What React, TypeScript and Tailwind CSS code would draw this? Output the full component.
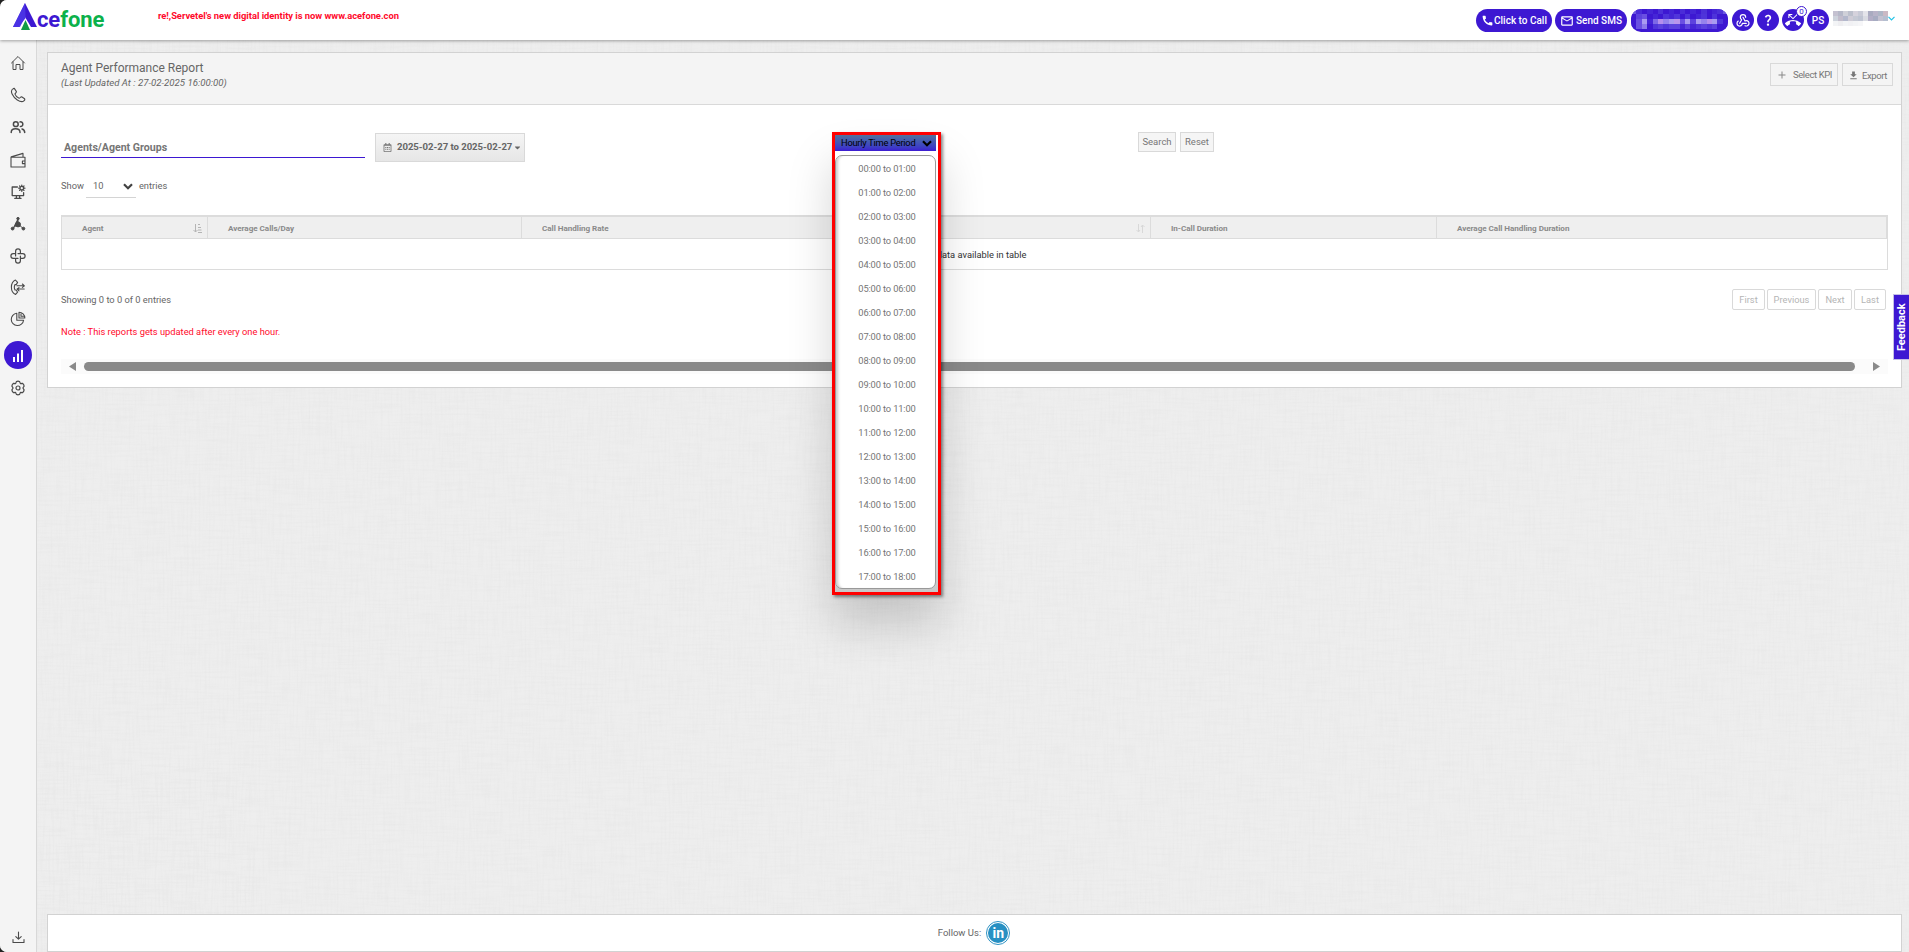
import React from "react";
import { MdCall, MdDownload, MdMailOutline, MdPhoneMissed, MdQuestionMark } from "react-icons/md";
import { FaCaretDown, FaRegCalendarAlt } from "react-icons/fa";
import { TbWebhook } from "react-icons/tb";

const line = {
  fill: "none",
  stroke: "currentColor",
  strokeLinecap: "round" as const,
  strokeLinejoin: "round" as const,
};

const navItems = [
  {
    name: "home",
    mt: "mt-[15px]",
    icon: (
      <g {...line} strokeWidth="1">
        <path d="M1.5 8 8 1.5 14.5 8M3 6.8V14.5H6V9.5H10V14.5H13V6.8" />
      </g>
    ),
  },
  {
    name: "calls",
    mt: "mt-[16px]",
    icon: (
      <path
        {...line}
        strokeWidth="1.1"
        d="M3.2 1.6 4.3 1.4 6.4 4.6C6.6 5.8 5 6.1 5 7.1 5.6 8.8 7.4 10.6 9.1 11.2 10.1 11.3 10.4 9.6 11.6 9.7L14.6 11.7C15 12.4 14.6 13.3 13.9 13.9 12.3 15.3 9.8 14.6 7.3 13 5 11.5 3.3 9.5 2.1 7 1.1 4.8 1 2.9 3.2 1.6Z"
      />
    ),
  },
  {
    name: "users",
    mt: "mt-[16px]",
    icon: (
      <g {...line} strokeWidth="1.5">
        <circle cx="5.8" cy="5.2" r="2.4" />
        <path d="M1.2 13.4C1.2 10.9 3 9.8 5.6 9.8S10 10.9 10 13.4M10 2.9C13.6 2.4 13.8 7.5 10.4 7.6M12 9.9C13.7 10.3 14.7 11.6 14.7 13.4" />
      </g>
    ),
  },
  {
    name: "wallet",
    mt: "mt-[17px]",
    icon: (
      <g {...line} strokeWidth="1.1">
        <path d="M1 5.2H15V15H1ZM1.2 4.9 13 1.4V5M15 9H12.4V11.6H15" />
      </g>
    ),
  },
  {
    name: "monitor",
    mt: "mt-[16px]",
    icon: (
      <g {...line} strokeWidth="1.3">
        <path d="M7.4 3H2.2V11.6H13.6V8.6M4.8 14.4H11M6.4 11.8V14M9.6 11.8V14" />
        <circle cx="11.8" cy="4.2" r="1.8" />
        <path d="M11.8 1.1V1.8M11.8 6.6V7.3M8.7 4.2H9.4M14.2 4.2H14.9M9.6 2 10 2.4M13.6 6 14 6.4M14 2 13.6 2.4M9.6 6.4 10 6" />
      </g>
    ),
  },
  {
    name: "network",
    mt: "mt-[16px]",
    icon: (
      <g fill="currentColor" stroke="currentColor" strokeWidth="1">
        <circle cx="8" cy="8.4" r="2.5" />
        <circle cx="8" cy="2.6" r="1.2" />
        <circle cx="2.6" cy="12.6" r="1.4" />
        <circle cx="13.4" cy="12.6" r="1.4" />
        <path d="M8 2V8L2.4 12.8M8 8 13.6 12.8" />
      </g>
    ),
  },
  {
    name: "integrations",
    mt: "mt-[16px]",
    icon: (
      <g {...line} strokeWidth="1.2">
        <path d="M5.6 8V3.2A2.4 2.3 0 0 1 10.4 3.2V5.4M8 5.6H12.8A2.3 2.4 0 0 1 12.8 10.4H10.6M10.4 8V12.8A2.4 2.3 0 0 1 5.6 12.8V10.6M8 10.4H3.2A2.3 2.4 0 0 1 3.2 5.6H5.4" />
      </g>
    ),
  },
  {
    name: "call-routing",
    mt: "mt-[15px]",
    icon: (
      <g {...line} strokeWidth="1.1">
        <path d="M5.4 1 7.6 3.4 6.2 5.6H5C4.2 7.2 4.2 9.4 5 11H6.2L7.6 13.2 5.6 15.4C2.8 14.2 1.4 11.4 1.4 8.2S2.8 2.2 5.4 1Z" />
        <path d="M7 6.8H14.2M12.4 5 14.4 6.8 12.4 8.4M14.2 10H7.4M9 8.6 7.2 10 9 11.8" />
      </g>
    ),
  },
  {
    name: "analytics",
    mt: "mt-[16px]",
    icon: (
      <g {...line} strokeWidth="1.1">
        <path d="M6.8 2.2A6.2 6.2 0 1 0 13.6 9.2H6.8Z" />
        <path d="M9 1.2V7H14.8A5.8 5.8 0 0 0 9 1.2ZM11 3V5.2H13.4" />
      </g>
    ),
  },
];

const times = [
  "00:00 to 01:00",
  "01:00 to 02:00",
  "02:00 to 03:00",
  "03:00 to 04:00",
  "04:00 to 05:00",
  "05:00 to 06:00",
  "06:00 to 07:00",
  "07:00 to 08:00",
  "08:00 to 09:00",
  "09:00 to 10:00",
  "10:00 to 11:00",
  "11:00 to 12:00",
  "12:00 to 13:00",
  "13:00 to 14:00",
  "14:00 to 15:00",
  "15:00 to 16:00",
  "16:00 to 17:00",
  "17:00 to 18:00",
];

const columns = [
  { title: "Agent", width: "w-[146px]", sort: "asc" },
  { title: "Average Calls/Day", width: "w-[314px]", sort: "" },
  { title: "Call Handling Rate", width: "w-[330px]", sort: "" },
  { title: "", width: "w-[299px]", sort: "both" },
  { title: "In-Call Duration", width: "w-[286px]", sort: "" },
  { title: "Average Call Handling Duration", width: "flex-1", sort: "" },
];

const pages = [
  { label: "First", width: "w-[33px]" },
  { label: "Previous", width: "w-[49px]" },
  { label: "Next", width: "w-[34px]" },
  { label: "Last", width: "w-[32px]" },
];

// redacted account pill and user name, one colour per mosaic cell
const pillMosaic = [
  ["#6b58e0", "#4a2cd8", "#3d18d2", "#4526d6", "#3d18d2", "#4c31d8", "#3d18d2", "#4526d6", "#3d18d2", "#4a2cd8", "#3d18d2", "#4526d6", "#3d18d2", "#4c31d8", "#3d18d2", "#4526d6", "#4c31d8", "#6b58e0"],
  ["#3d18d2", "#5c42de", "#6a50e2", "#3d18d2", "#4526d6", "#3d18d2", "#4e34da", "#4526d6", "#5036da", "#3d18d2", "#4e34da", "#3d18d2", "#4526d6", "#4e34da", "#3d18d2", "#4e34da", "#3d18d2", "#3d18d2"],
  ["#3d18d2", "#6a50e2", "#a99bf0", "#4526d6", "#7d69e6", "#b58eec", "#9583ec", "#a99bf0", "#b995ec", "#6a50e2", "#a99bf0", "#5c42de", "#a99bf0", "#9583ec", "#b58eec", "#a99bf0", "#5036da", "#3d18d2"],
  ["#3d18d2", "#6a50e2", "#8d7bea", "#3d18d2", "#5036da", "#5c42de", "#5036da", "#5c42de", "#5c42de", "#4526d6", "#5c42de", "#4526d6", "#5036da", "#5c42de", "#5036da", "#5c42de", "#3d18d2", "#3d18d2"],
];

const nameMosaic = [
  ["#c4c1d0", "#b5b8c8", "#cfd0d8", "#bcc0cc", "#d5d2dc", "#c8cad6", "#e4e4ea", "#a9abc0", "#b8b3c8", "#aeb6c6", "#cbb9c4"],
  ["#cdd3dc", "#c2bccb", "#b3b8cc", "#cfccd6", "#c5c9d4", "#bfc4d2", "#d9dbe2", "#b3aec6", "#a7acc2", "#c4c1d0", "#b5bfd0"],
  ["#f3f4f6", "#eeeef1", "#f3f4f6", "#f1f1f4", "#f3f4f6", "#f6f6f8", "#ffffff", "#ffffff", "#ffffff", "#ffffff", "#ffffff"],
];

const Mosaic = ({ rows, w, h }: { rows: string[][]; w: number; h: number }) => (
  <svg width={w * rows[0].length} height={h * rows.length} shapeRendering="crispEdges">
    {rows.map((row, y) =>
      row.map((fill, x) => (
        <rect key={`${x}-${y}`} x={x * w} y={y * h} width={w} height={h} fill={fill} />
      ))
    )}
  </svg>
);

const Chevron = ({ className }: { className: string }) => (
  <svg viewBox="0 0 10 7" className={className}>
    <path d="M1 1.3 5 5.3 9 1.3" fill="none" stroke="currentColor" strokeWidth="2.2" />
  </svg>
);

// faint linen weave behind the page content
const Linen = () => (
  <svg className="pointer-events-none absolute inset-0 size-full opacity-35">
    <filter id="weft" x="0" y="0" width="100%" height="100%">
      <feTurbulence type="fractalNoise" baseFrequency="0.03 0.5" numOctaves="2" seed="4" />
      <feColorMatrix values="0 0 0 0 0.4  0 0 0 0 0.4  0 0 0 0 0.4  0.3 0 0 0 -0.12" />
    </filter>
    <filter id="warp" x="0" y="0" width="100%" height="100%">
      <feTurbulence type="fractalNoise" baseFrequency="0.5 0.03" numOctaves="2" seed="9" />
      <feColorMatrix values="0 0 0 0 0.4  0 0 0 0 0.4  0 0 0 0 0.4  0.3 0 0 0 -0.12" />
    </filter>
    <rect width="100%" height="100%" filter="url(#weft)" />
    <rect width="100%" height="100%" filter="url(#warp)" />
  </svg>
);

const Header = () => (
  <header className="relative z-10 flex h-10 shrink-0 items-start bg-white shadow-[0_1px_3px_rgba(0,0,0,0.35)]">
    <div className="flex w-[158px] items-start pl-[13px] pt-[3px]">
      <svg width="25" height="27" viewBox="0 0 25 27">
        <path d="M12 0 0 24H7L12 14Z" fill="#5a43ee" />
        <path d="M12 0 24 24H18L12 14Z" fill="#3d18d2" />
        <path d="M12 0 12.6 15 5.6 24H0Z" fill="#4a32e4" />
        <path d="M12.5 17 8 27H17Z" fill="#0e9b45" />
      </svg>
      <span className="-ml-px mt-[5px] text-[22px] font-bold leading-6 tracking-[-0.1px] text-[#3d18d2]">
        ce<span className="text-[#0cb14b]">fone</span>
      </span>
    </div>
    <div className="mt-[9px] whitespace-nowrap text-[9.4px] font-bold leading-[14px] tracking-[-0.03px] text-[#ff0a2b]">
      re!,Servetel's new digital identity is now www.acefone.con
    </div>

    <div className="ml-auto mr-[14px] flex gap-[3px] pt-[9px] text-[10px] font-medium text-white">
      <button className="flex h-[23px] w-[76px] items-center justify-center rounded-full bg-[#3d18d2]">
        <MdCall size={13} />
        Click to Call
      </button>
      <button className="flex h-[23px] w-[72px] items-center justify-center gap-0.5 rounded-full bg-[#3d18d2]">
        <MdMailOutline size={14} />
        Send SMS
      </button>
      <div className="mx-px flex h-[23px] w-[97px] items-start justify-center overflow-hidden rounded-[10px] bg-[#3d18d2]">
        <Mosaic rows={pillMosaic} w={5.4} h={5} />
      </div>
      <button className="flex size-[22px] items-center justify-center rounded-full bg-[#3d18d2]">
        <TbWebhook size={16} strokeWidth={1.8} />
      </button>
      <button className="flex size-[22px] items-center justify-center rounded-full bg-[#3d18d2]">
        <MdQuestionMark size={14} />
      </button>
      <button className="relative flex size-[22px] items-center justify-center rounded-full bg-[#3d18d2]">
        <MdPhoneMissed size={16} />
        <span className="absolute -right-[3px] -top-[3px] flex size-[11px] items-center justify-center rounded-full border border-[#3d18d2] bg-white text-[8px] font-normal leading-none text-[#3d18d2]">
          0
        </span>
      </button>
      <button className="flex size-[22px] items-center justify-center rounded-full bg-[#3d18d2]">
        PS
      </button>
      <div className="ml-px mt-0.5">
        <Mosaic rows={nameMosaic} w={5} h={5} />
      </div>
      <svg width="7" height="5" viewBox="0 0 7 5" className="-ml-[3px] mt-[7px]">
        <path d="M.5.8 3.5 3.8 6.5.8" fill="none" stroke="#22c3e6" strokeWidth="1.2" />
      </svg>
    </div>
  </header>
);

const Sidebar = () => (
  <aside className="flex w-[37px] shrink-0 flex-col items-center border-r border-[#d8d8d8] bg-[#f4f4f4] text-[#4a4a4a]">
    {navItems.map((item) => (
      <svg key={item.name} viewBox="0 0 16 16" className={`${item.mt} size-4 shrink-0`}>
        {item.icon}
      </svg>
    ))}
    <div className="mt-[14px] flex size-7 items-center justify-center rounded-full bg-[#3d18d2]">
      <svg width="12" height="13" viewBox="0 0 12 13" fill="#fff">
        <path d="M1 8H3V13H1ZM5 4.5H7V13H5ZM9 1H11V13H9Z" />
      </svg>
    </div>
    <svg viewBox="0 0 16 16" className="mt-[11px] size-4" {...line} strokeWidth="1.2">
      <circle cx="8" cy="8" r="2" />
      <path d="M6.4 1.6Q8 .8 9.6 1.6L10.4 3.6 12.5 3.3Q14 4.3 14.1 6.1L12.9 8 14.1 9.9Q14 11.7 12.5 12.7L10.4 12.4 9.6 14.4Q8 15.2 6.4 14.4L5.6 12.4 3.5 12.7Q2 11.7 1.9 9.9L3.1 8 1.9 6.1Q2 4.3 3.5 3.3L5.6 3.6Z" />
    </svg>
    <svg viewBox="0 0 13 13" className="mb-[8px] mt-auto size-[13px]" {...line} strokeWidth="1.1">
      <path d="M1 8.5V11.5H12V8.5M6.5 1V8M3.8 5.6 6.5 8.2 9.2 5.6" />
    </svg>
  </aside>
);

const TimePeriod = () => (
  <div className="absolute -top-px left-[771px] z-10 h-[463px] w-[109px] border-[3px] border-[#ff0000] shadow-[2px_2px_3px_rgba(0,0,0,0.45),0_30px_45px_rgba(0,0,0,0.17)]">
    <div className="size-full bg-gradient-to-b from-white from-60% to-[#c8c8c8]">
      <div className="flex h-4 w-[101px] items-center justify-between bg-gradient-to-b from-[#52709b] to-[#3d18d2] pl-[6px] pr-1 text-[9.3px] tracking-[-0.25px] text-black">
        Hourly Time Period
        <Chevron className="h-[7px] w-[10px]" />
      </div>
      <ul className="mt-1 h-[434px] w-[101px] rounded-[7px] border border-[#999] bg-white pl-[3px] pt-px text-center text-[9.3px] tracking-[-0.13px] text-[#757575] shadow-[inset_4px_0_3px_-2px_#ccc]">
        {times.map((time) => (
          <li key={time} className="h-6 leading-6">
            {time}
          </li>
        ))}
      </ul>
    </div>
  </div>
);

const Filters = () => (
  <div className="relative flex h-[30px] items-start">
    <div className="h-[25px] w-[304px] border-b border-[#3d18d2] pl-[3px] text-[10.6px] font-bold leading-[29px] text-[#757575]">
      Agents/Agent Groups
    </div>
    <button className="ml-[10px] flex h-[29px] w-[150px] items-center whitespace-nowrap border border-[#d9d9d9] bg-gradient-to-b from-[#f5f5f5] to-[#e6e6e6] pb-px pl-[7px] text-[9.6px] font-bold tracking-[-0.05px] text-[#666]">
      <FaRegCalendarAlt size={9} className="mr-[5px] shrink-0 text-[#777]" />
      2025-02-27 to 2025-02-27
      <FaCaretDown size={9} className="ml-px shrink-0" />
    </button>
    <TimePeriod />
    <div className="ml-[613px] flex gap-1 text-[9.5px] text-[#777]">
      <button className="-mt-px h-5 w-[38px] border border-[#d9d9d9] bg-[#f5f5f5]">Search</button>
      <button className="-mt-px h-5 w-[34px] border border-[#d9d9d9] bg-[#f5f5f5]">Reset</button>
    </div>
  </div>
);

const SortIcon = ({ sort }: { sort: string }) => (
  <svg width="9" height="9" viewBox="0 0 9 9" fill="none" stroke={sort === "asc" ? "#b4b4b4" : "#d8d8d8"}>
    {sort === "asc" ? (
      <path d="M2.5 0V8M.5 6 2.5 8 4.5 6M5 .5H7M5 3.5H8M5 6H8.5M5 8.5H9" />
    ) : (
      <path d="M2.5 0V8M.5 6 2.5 8 4 6M6.5 9V1M5 3 6.5 1 8.5 3" />
    )}
  </svg>
);

const Table = () => (
  <div className="mt-[17px] border border-t-2 border-[#dcdcdc]">
    <div className="flex h-[22px] border-b border-[#dcdcdc] bg-[#efefef] text-[8.1px] font-bold text-[#8a8a8a]">
      {columns.map((col, i) => (
        <div
          key={i}
          className={`${col.width} flex shrink-0 items-center justify-between border-r border-[#dcdcdc] pl-5 pr-[5px] pt-px`}
        >
          <span className="tracking-[-0.03px]">{col.title}</span>
          {col.sort && <SortIcon sort={col.sort} />}
        </div>
      ))}
    </div>
    <div className="h-[30px] text-center text-[9.3px] leading-[32px] text-[#333]">
      No data available in table
    </div>
  </div>
);

const App = () => {
  return (
    <div className="bg-[#222]">
      <div className="relative flex h-[952px] w-full flex-col overflow-hidden rounded-l-[7px] bg-[#ededed] font-['Roboto',sans-serif] text-[9.3px] text-[#666]">
        <Header />
        <div className="flex min-h-0 flex-1">
          <Sidebar />
          <main className="relative flex flex-1 flex-col bg-[#eeeeee] pl-[10px] pr-[7px] pt-3">
            <Linen />
            {/* Report */}
            <section className="relative border border-[#d2d2d2] bg-white">
              <div className="flex h-[52px] justify-between border-b border-[#d9d9d9] bg-[#f4f4f4] pl-[13px] pr-[8px]">
                <div>
                  <h1 className="pt-[7px] text-[12px] leading-4">Agent Performance Report</h1>
                  <p className="text-[9.65px] italic leading-[14px]">(Last Updated At : 27-02-2025 16:00:00)</p>
                </div>
                <div className="flex gap-1 pt-[10px] text-[9.5px] tracking-[-0.4px] text-[#777]">
                  <button className="flex h-[23px] w-[68px] items-center justify-end border border-[#d9d9d9] pr-[5px] pt-px">
                    <svg width="8" height="8" viewBox="0 0 8 8" className="mr-[7px]">
                      <path d="M4 .5V7.5M.5 4H7.5" stroke="#888" />
                    </svg>
                    Select KPI
                  </button>
                  <button className="flex h-[23px] w-[51px] items-center justify-end border border-[#d9d9d9] pr-[5px] pt-[3px]">
                    <MdDownload size={11} className="mb-[2px] mr-[3px]" />
                    Export
                  </button>
                </div>
              </div>

              <div className="px-[13px] pb-[13px] pt-[28px]">
                <Filters />
                <div className="mt-[12px] flex h-[23px] leading-[21px]">
                  Show
                  <div className="ml-[2px] flex w-[50px] items-center justify-between border-b border-[#d4d4d4] pl-[7px] pr-[3px]">
                    <span className="pb-px">10</span>
                    <Chevron className="h-[7px] w-[10px] text-[#444]" />
                  </div>
                  <span className="ml-[3px]">entries</span>
                </div>
                <Table />
                <div className="mt-[19px] flex h-[21px] items-center justify-between">
                  <span>Showing 0 to 0 of 0 entries</span>
                  <div className="mr-[2px] flex gap-0.5 text-[#b5b5b5]">
                    {pages.map((page) => (
                      <button key={page.label} className={`${page.width} h-[21px] rounded-[2px] border border-[#d9d9d9]`}>
                        {page.label}
                      </button>
                    ))}
                  </div>
                </div>
                <p className="mt-[15px] leading-[14px] text-[#ff0a2b]">
                  Note : This reports gets updated after every one hour.
                </p>
                <div className="mt-5 flex h-[15px] items-center bg-[#fbfbfb] px-2">
                  <svg width="7" height="9" viewBox="0 0 7 9" fill="#8a8a8a">
                    <path d="M7 0V9L0 4.5Z" />
                  </svg>
                  <div className="ml-2 mr-[18px] h-[9px] flex-1 rounded-full bg-[#8a8a8a]" />
                  <svg width="7" height="9" viewBox="0 0 7 9" fill="#8a8a8a">
                    <path d="M0 0V9L7 4.5Z" />
                  </svg>
                </div>
              </div>
            </section>

            <footer className="relative mt-auto flex h-[38px] items-center justify-center gap-[5px] border border-[#d2d2d2] bg-white pr-px text-[9.5px]">
              Follow Us:
              <span className="flex size-6 items-center justify-center rounded-full border border-[#2f93c4] bg-white">
                <span className="flex size-5 items-center justify-center rounded-full bg-[#2790c3] text-[14px] font-bold leading-none text-white">
                  in
                </span>
              </span>
            </footer>
          </main>
        </div>
        <button className="absolute right-0 top-[294px] z-20 flex h-[66px] w-4 items-center justify-center border border-r-0 border-[#c4c0e6] bg-[#3d18d2]">
          <span className="-rotate-90 whitespace-nowrap text-[11px] font-bold text-white">Feedback</span>
        </button>
      </div>
    </div>
  );
};

export default App;
